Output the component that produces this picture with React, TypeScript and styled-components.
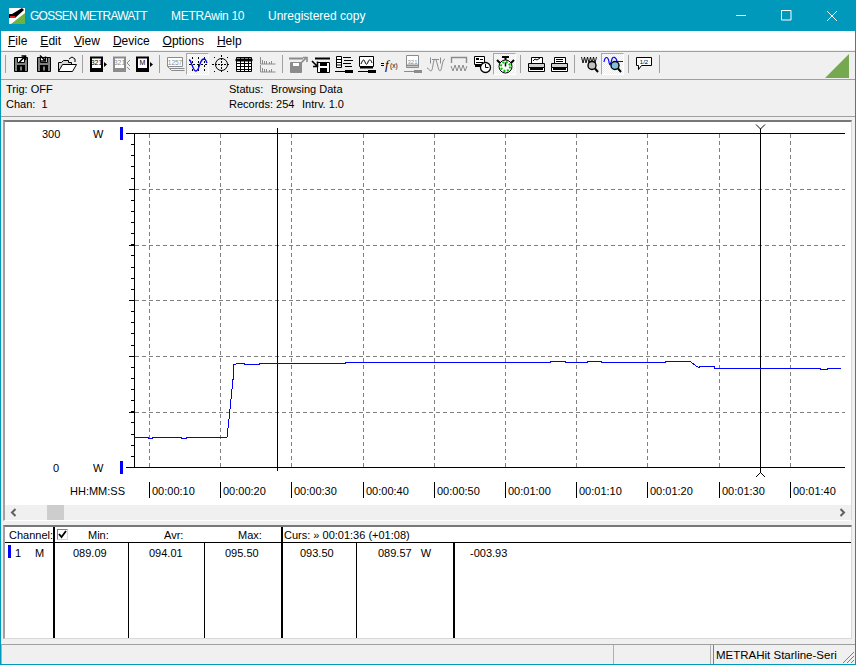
import React from 'react'
import styled, { createGlobalStyle } from 'styled-components'

const GlobalStyle = createGlobalStyle`
  html, body {
    margin: 0;
    padding: 0;
    background: #f0f0f0;
    overflow: hidden;
  }
`

const Window = styled.div`
  box-sizing: border-box;
  width: 856px;
  height: 665px;
  display: flex;
  flex-direction: column;
  background: #f0f0f0;
  border: 1px solid #0099bc;
  border-top: none;
  color: #000;
  font-family: 'Liberation Sans', Arial, sans-serif;
  font-size: 11px;
  overflow: hidden;
`

const TitleBar = styled.div`
  flex: 0 0 31px;
  display: flex;
  align-items: center;
  background: #0099bc;
  color: #fff;
  font-size: 12px;
  padding-left: 8px;
`

const TitleText = styled.span<{ $width: number; $tight?: number }>`
  width: ${(p) => p.$width}px;
  letter-spacing: ${(p) => p.$tight ?? 0}px;
  white-space: nowrap;
`

const LogoMark = styled.svg`
  margin-right: 5px;
`

const WindowControls = styled.div`
  margin-left: auto;
  margin-right: 1px;
  display: flex;
`

const WindowButton = styled.div`
  width: 45px;
  height: 31px;
  display: flex;
  align-items: center;
  justify-content: center;
`

const MenuBar = styled.div`
  flex: 0 0 19px;
  display: flex;
  align-items: center;
  gap: 13px;
  background: #fff;
  padding-left: 7px;
  font-size: 12px;
`

const MenuItem = styled.span`
  white-space: nowrap;
`

const Toolbar = styled.div`
  box-sizing: border-box;
  flex: 0 0 29px;
  display: flex;
  align-items: flex-start;
  margin-top: 1px;
  padding-top: 1px;
  border-top: 1px solid #a0a0a0;
  border-bottom: 1px solid #a0a0a0;
`

const Separator = styled.div`
  flex: 0 0 8px;
  height: 18px;
  margin-top: 2px;
  display: flex;
  justify-content: center;

  &::before {
    content: '';
    width: 1px;
    height: 100%;
    background: #a0a0a0;
  }
`

const ToolButton = styled.div<{ $active?: boolean; $muted?: boolean }>`
  box-sizing: border-box;
  flex: 0 0 23px;
  height: 22px;
  display: flex;
  align-items: center;
  justify-content: center;
  color: ${(p) => (p.$muted ? '#8c8c8c' : '#000')};
  ${(p) =>
    p.$active &&
    `
    background: repeating-conic-gradient(#fff 0 25%, #ececec 0 50%) 0 0 / 2px 2px;
    border: 1px solid #a8a8a8;
    border-right-color: #fff;
    border-bottom-color: #fff;
  `}
`

const CornerMark = styled.svg`
  margin-left: auto;
  margin-right: 6px;
  margin-top: 1px;
`

const InfoPanel = styled.div`
  flex: 0 0 36px;
  display: grid;
  grid-template-columns: 223px 1fr;
  grid-auto-rows: 15px;
  align-content: center;
  padding-left: 5px;
  border-bottom: 1px solid #a0a0a0;
`

const InfoCell = styled.div`
  display: flex;
  white-space: pre;
`

const InfoLabel = styled.span<{ $width?: number }>`
  width: ${(p) => (p.$width ? `${p.$width}px` : 'auto')};
`

const ChartFrame = styled.div`
  flex: 0 0 398px;
  display: flex;
  flex-direction: column;
  margin: 3px 3px 0 2px;
  background: #fff;
  border-top: 2px solid #787878;
  border-left: 2px solid #a0a0a0;
  border-right: 1px solid #d8d8d8;
  border-bottom: 1px solid #fff;
`

const ChartSvg = styled.svg`
  display: block;
  flex: 0 0 383px;
  font-family: 'Liberation Sans', Arial, sans-serif;
  font-size: 11px;
`

const ScrollBar = styled.div`
  flex: 1;
  display: flex;
  align-items: center;
  background: #f0f0f0;
`

const ScrollArrow = styled.svg<{ $right?: boolean }>`
  margin-left: ${(p) => (p.$right ? 'auto' : '5px')};
  margin-right: ${(p) => (p.$right ? '5px' : '0')};
`

const ScrollThumb = styled.div`
  width: 17px;
  height: 100%;
  margin-left: 30px;
  background: #cdcdcd;
`

const TableFrame = styled.div`
  flex: 0 0 111px;
  margin: 4px 3px 0 2px;
  display: grid;
  grid-template-columns: 50px 74px 76px 78px 74px 98px 1fr;
  grid-template-rows: 16px 1fr;
  background: #fff;
  border-top: 2px solid #787878;
  border-left: 2px solid #a0a0a0;
  border-right: 1px solid #d8d8d8;
  border-bottom: 1px solid #d8d8d8;
`

const HeadCell = styled.div<{ $line?: boolean; $pad?: number; $span?: number }>`
  display: flex;
  align-items: center;
  box-sizing: border-box;
  padding-left: ${(p) => p.$pad ?? 0}px;
  border-bottom: 1px solid #000;
  border-right: ${(p) => (p.$line ? '2px solid #000' : 'none')};
  grid-column: ${(p) => (p.$span ? `span ${p.$span}` : 'auto')};
  white-space: pre;
`

const Cell = styled.div<{ $line?: number; $pad?: number }>`
  box-sizing: border-box;
  display: flex;
  padding-top: 4px;
  padding-left: ${(p) => p.$pad ?? 0}px;
  border-right: ${(p) => (p.$line ? `${p.$line}px solid #000` : 'none')};
  white-space: pre;
`

const CheckBox = styled.div`
  box-sizing: border-box;
  width: 11px;
  height: 11px;
  margin-right: 20px;
  border: 1px solid #808080;
  border-right-color: #d8d8d8;
  border-bottom-color: #d8d8d8;
  display: flex;
  align-items: center;
  justify-content: center;
`

const ChannelSwatch = styled.span`
  width: 3px;
  height: 13px;
  margin-top: -2px;
  margin-right: 4px;
  background: #0000ff;
`

const ChannelNo = styled.span`
  width: 20px;
`

const StatusBar = styled.div`
  flex: 1;
  margin-top: 5px;
  display: grid;
  grid-template-columns: 609px 3px 98px 2px 1fr;
  border-top: 1px solid #a0a0a0;
`

const StatusPane = styled.div<{ $sunken?: boolean; $closed?: boolean; $column: number }>`
  grid-column: ${(p) => p.$column};
  display: flex;
  align-items: center;
  position: relative;
  padding-left: 2px;
  font-size: 11.5px;
  white-space: nowrap;
  overflow: hidden;
  border-left: 1px solid ${(p) => (p.$sunken ? '#808080' : '#b0b0b0')};
  border-right: ${(p) => (p.$closed ? '1px solid #b0b0b0' : 'none')};
`

const Grip = styled.svg`
  position: absolute;
  right: 0;
  bottom: 0;
`

const ticks = [149, 220, 291, 363, 434, 505, 576, 647, 719, 790]
const labels = [
  '00:00:10',
  '00:00:20',
  '00:00:30',
  '00:00:40',
  '00:00:50',
  '00:01:00',
  '00:01:10',
  '00:01:20',
  '00:01:30',
  '00:01:40',
]
const majors = [189, 245, 300, 356, 412]
const minors = Array.from({ length: 29 }, (_, i) => 133 + Math.round(((i + 1) * 334) / 30))

const trace =
  '134,438 148,438 149,439 152,439 153,438 181,438 182,439 186,439 187,438 227,438 229,420 233,380 233,369 234,365 238,364 244,364 245,365 259,365 260,364 345,364 346,363 550,363 551,362 565,362 566,363 587,363 588,362 601,362 602,363 665,363 666,362 690,362 697,367 699,368 700,367 714,367 715,369 820,369 821,370 827,370 828,369 841,369'

const Chart = () => (
  <ChartSvg width={846} height={383} viewBox="5 122 846 383">
    <g stroke="#808080" strokeDasharray="4 3" shapeRendering="crispEdges">
      {ticks.map((x) => (
        <line key={x} x1={x + 0.5} x2={x + 0.5} y1={134} y2={467} />
      ))}
      {majors.map((y) => (
        <line key={y} x1={135} x2={845} y1={y + 0.5} y2={y + 0.5} />
      ))}
    </g>
    <g stroke="#000" shapeRendering="crispEdges">
      <line x1={126} x2={845} y1={133.5} y2={133.5} />
      <line x1={126} x2={845} y1={467.5} y2={467.5} />
      <line x1={134.5} x2={134.5} y1={133} y2={468} />
      {minors.map((y) => (
        <line key={y} x1={131} x2={134} y1={y + 0.5} y2={y + 0.5} />
      ))}
      {majors.map((y) => (
        <line key={y} x1={129} x2={134} y1={y + 0.5} y2={y + 0.5} />
      ))}
      <line x1={277.5} x2={277.5} y1={128} y2={471} />
      <line x1={760.5} x2={760.5} y1={129} y2={473} />
      {ticks.map((x) => (
        <line key={x} x1={x + 0.5} x2={x + 0.5} y1={482} y2={498} />
      ))}
    </g>
    <g stroke="#000" fill="none">
      <path d="M756 124.5 760.5 129 765 124.5" />
      <path d="M756 477 760.5 472.5 765 477" />
    </g>
    <polyline
      points={trace}
      transform="translate(0 -0.5)"
      fill="none"
      stroke="#0000ff"
      shapeRendering="crispEdges"
    />
    <g fill="#0000ff">
      <rect x={120} y={127} width={3} height={13} />
      <rect x={120} y={461} width={3} height={13} />
    </g>
    <g fill="#000">
      <text x={42} y={138}>300</text>
      <text x={93} y={138}>W</text>
      <text x={53} y={472}>0</text>
      <text x={93} y={472}>W</text>
      <text x={70} y={495}>HH:MM:SS</text>
      {ticks.map((x, i) => (
        <text key={x} x={x + 3} y={495}>
          {labels[i]}
        </text>
      ))}
    </g>
  </ChartSvg>
)

const Floppy = () => (
  <>
    <path d="M3.5 3.5h13v14h-13z" fill="#808080" stroke="currentColor" />
    <path d="M6.5 3.500h7v5h-7z" fill="#fff" stroke="currentColor" />
    <path d="M6 11h8v6.500H6z" fill="currentColor" />
    <path d="M9 12.500h2v4H9z" fill="#808080" />
  </>
)

const MeterBody = ({ label }: { label: string }) => (
  <>
    <path d="M3 3.500h11v12H3z" fill="#fff" stroke="currentColor" strokeWidth={2} />
    <path d="M2 14h13v4H2z" fill="currentColor" />
    <text x={8.500} y={11} fontSize={7} fontFamily="Liberation Sans" textAnchor="middle" fill="currentColor">
      {label}
    </text>
  </>
)

const Lead = () => (
  <>
    <path d="M1 17.500h11" stroke="currentColor" />
    <path d="M11 16h8v3h-8z" fill="currentColor" />
  </>
)

const Glass = ({ fill }: { fill: string }) => (
  <>
    <circle cx={12} cy={11.500} r={4} fill={fill} stroke="currentColor" strokeWidth={1.400} />
    <path d="M15 14.500 18 18" stroke="currentColor" strokeWidth={2} />
  </>
)

const Printer = ({ open }: { open?: boolean }) => (
  <>
    <path d="M5.500 3.500h11v6h-11z" fill="#fff" stroke="currentColor" />
    {open ? (
      <path d="M7 7l2-2 2 1 3-2" stroke="currentColor" fill="none" />
    ) : (
      <path d="M7 5.500h7M7 7.500h7" stroke="currentColor" />
    )}
    <path d="M2.500 9.500h16v4h-16z" fill="#d0d0d0" stroke="currentColor" />
    <path d="M2.500 13.500h16v4h-16z" fill="#fff" stroke="currentColor" />
    <path d="M4 15h13" stroke="currentColor" strokeWidth={2} />
  </>
)

const icons: Record<string, React.ReactNode> = {
  saveOut: (
    <>
      <Floppy />
      <path d="M8.500 8 14 2.500M10.500 2h4v4" stroke="currentColor" strokeWidth={1.600} fill="none" />
    </>
  ),
  saveIn: (
    <>
      <Floppy />
      <path d="M6 1.500 11 6.500M6.500 7h5V2.500" stroke="currentColor" strokeWidth={1.600} fill="none" />
    </>
  ),
  open: (
    <>
      <path d="M1.500 8.500h3l2-2h5v2h3v9h-13z" fill="#d8d8d8" stroke="currentColor" />
      <path d="M1.500 17.500 5.500 10.500h14l-4 7z" fill="#fff" stroke="currentColor" />
      <path d="M12 5l3-2 3 2M18 5v3" stroke="currentColor" fill="none" />
    </>
  ),
  meterOut: (
    <>
      <MeterBody label="321" />
      <path d="M16 8l3 2.500-3 2.500z" fill="currentColor" />
    </>
  ),
  meterSwap: (
    <>
      <MeterBody label="321" />
      <path d="M19 6l-3 3 3 3M16 13l3 3" stroke="currentColor" fill="none" />
    </>
  ),
  meterMem: (
    <>
      <MeterBody label="M" />
      <path d="M16 8l3 2.500-3 2.500z" fill="currentColor" />
    </>
  ),
  counter: (
    <>
      <path d="M2.500 3.500h15v9h-15z" fill="#fff" stroke="currentColor" />
      <text x={10} y={10.500} fontSize={6.500} fontFamily="Liberation Sans" textAnchor="middle" fill="currentColor">
        1257
      </text>
      <path d="M2.500 12.500l2 2h15M4.500 14.500l2 2h13" stroke="currentColor" fill="none" />
    </>
  ),
  wave: (
    <>
      <path d="M1 10.500h18M4.500 3v15M10.500 3v15M16.500 3v15" stroke="#000" strokeDasharray="2 2" />
      <path d="M1 6c2 0 2 3 3 5s2 6 4 6 3-4 4-7 2-5 4-5 2 2 3 4" stroke="#0000ff" fill="none" strokeWidth={1.300} />
    </>
  ),
  target: (
    <>
      <path d="M1 10.500h18M10.500 1v18" stroke="currentColor" strokeDasharray="2 1" />
      <circle cx={10.500} cy={10.500} r={6} fill="none" stroke="currentColor" />
      <path d="M3 3.500h1M16 3.500h1M3 17.500h1M16 17.500h1" stroke="currentColor" />
    </>
  ),
  table: (
    <>
      <path d="M2.500 3.500h15v14h-15z" fill="#fff" stroke="currentColor" />
      <path d="M2 5h16v2H2zM6.500 4v13M10.500 4v13M14.500 4v13M3 9.500h14M3 12.500h14M3 15.500h14" fill="currentColor" stroke="currentColor" />
    </>
  ),
  bars: (
    <>
      <path d="M3.500 3v7h15M3.500 11v7h15" stroke="currentColor" fill="none" />
      <path d="M5.500 6v4M7.500 7v3M9.500 7v3M12.500 8v2M14.500 7v3M5.500 14v4M7.500 15v3M9.500 15v3M12.500 16v2M14.500 15v3" stroke="currentColor" />
    </>
  ),
  floppyUp: (
    <>
      <path d="M2.500 8.500h11v10h-11z" fill="currentColor" stroke="currentColor" />
      <path d="M5 9h6v3H5z" fill="#fff" />
      <path d="M1 4.500h14" stroke="currentColor" strokeWidth={2} />
      <path d="M13 9l5-5M15 3.500h4V8" stroke="currentColor" strokeWidth={1.600} fill="none" />
    </>
  ),
  floppyDown: (
    <>
      <path d="M6.500 8.500h12v10h-12z" fill="#fff" stroke="currentColor" />
      <path d="M9 14h7v4H9zM9 9h7v3H9z" fill="currentColor" />
      <path d="M4 4.500h15" stroke="currentColor" strokeWidth={2} />
      <path d="M1 7l5 5M6.500 7.500V12.500H2" stroke="currentColor" strokeWidth={1.600} fill="none" />
    </>
  ),
  config: (
    <>
      <path d="M2.500 2.500h5v11h-5z" fill="#fff" stroke="currentColor" />
      <path d="M3 5.500h4M3 8.500h4M3 11h4" stroke="currentColor" />
      <path d="M9 3h8v1H9zM10 6h9v1h-9zM9 9h8v1H9zM11 12h7v1h-7z" fill="currentColor" />
      <Lead />
    </>
  ),
  monitor: (
    <>
      <path d="M2.500 2.500h14v10h-14z" fill="#fff" stroke="currentColor" />
      <path d="M4 10c2-5 3-5 4-2s2 3 3 0 3-3 4 1" stroke="currentColor" fill="none" />
      <path d="M3 12.500h13v2H3z" fill="currentColor" />
      <Lead />
    </>
  ),
  formula: (
    <>
      <path d="M1 9.500h3M1 11.500h3" stroke="currentColor" />
      <text x={5} y={15} fontSize={13} fontStyle="italic" fontFamily="Liberation Serif" fill="currentColor">
        f
      </text>
      <text x={10} y={13.500} fontSize={6.500} fontFamily="Liberation Sans" fill="currentColor">
        (x)
      </text>
    </>
  ),
  meterLead: (
    <>
      <path d="M3.500 1.500h12v12h-12z" fill="#fff" stroke="currentColor" />
      <text x={9.500} y={9.500} fontSize={6} fontFamily="Liberation Sans" textAnchor="middle" fill="currentColor">
        321
      </text>
      <path d="M4 11.500h11" stroke="currentColor" strokeWidth={2} />
      <Lead />
    </>
  ),
  sineCut: (
    <>
      <path d="M1 14c2 0 2 3 4 3s2-12 4-12 3 12 5 12 2-12 5-12" stroke="currentColor" fill="none" />
      <path d="M4.500 3.500v6M14.500 3.500v6M6 5.500h7" stroke="currentColor" />
    </>
  ),
  sineDense: (
    <>
      <path d="M2.500 9V3.500h15V9" stroke="currentColor" fill="none" strokeWidth={1.400} />
      <path d="M2 12l2 5 2-6 2 6 2-6 2 6 2-6 2 6 2-5" stroke="currentColor" fill="none" />
    </>
  ),
  clock: (
    <>
      <path d="M2.500 2.500h10v8h-10z" fill="#fff" stroke="currentColor" />
      <path d="M4 4h3v2H4zM8 5h3v1H8zM4 8h7v1H4zM3 11h9v2H3z" fill="currentColor" />
      <circle cx={13.500} cy={13.500} r={5} fill="#fff" stroke="currentColor" strokeWidth={1.300} />
      <path d="M13.500 10v3.500h3" stroke="currentColor" fill="none" />
    </>
  ),
  timer: (
    <>
      <path d="M7 2h7v2H7zM9.500 4h2v4h-2z" fill="currentColor" />
      <path d="M2 6l3 3M19 6l-3 3" stroke="currentColor" strokeWidth={2} />
      <circle cx={10.500} cy={12.500} r={6.500} fill="#fff" stroke="currentColor" />
      <circle cx={10.500} cy={12.500} r={4.500} fill="none" stroke="#00c000" strokeWidth={2} strokeDasharray="2 1.500" />
      <path d="M10.500 8.500v4" stroke="currentColor" strokeWidth={1.500} />
    </>
  ),
  print: <Printer open />,
  printAlt: <Printer />,
  zoomDense: (
    <>
      <path d="M1.500 3l1.500 6 1.500-6 1.500 6 1.500-6 1.500 6 1.500-6 1.500 6 1.500-6 1.500 6 1.500-6" stroke="currentColor" fill="none" strokeWidth={0.900} />
      <Glass fill="#c0c0c0" />
    </>
  ),
  zoomWave: (
    <>
      <path d="M1 8c1-6 4-6 5 0s2 0 3-3 4-2 5 2" stroke="#0000ff" fill="none" strokeWidth={1.200} />
      <path d="M13 7.500h7" stroke="#0000ff" />
      <Glass fill="#80c0d8" />
    </>
  ),
  note: (
    <>
      <path d="M2.500 3.500h15v8h-10l-3 4v-4h-2z" fill="#fff" stroke="currentColor" />
      <text x={10} y={9.500} fontSize={6} fontFamily="Liberation Sans" textAnchor="middle" fill="currentColor">
        1/2
      </text>
    </>
  ),
}

const Tool = ({ name, active, muted }: { name: string; active?: boolean; muted?: boolean }) => (
  <ToolButton $active={active} $muted={muted}>
    <svg width={20} height={20} viewBox="0 0 20 20">
      {icons[name]}
    </svg>
  </ToolButton>
)

const Logo = () => (
  <LogoMark width={16} height={16} viewBox="0 0 16 16">
    <path d="M0 0h16v16H0z" fill="#fff" />
    <path d="M2 16 16 5v11z" fill="#6cb33f" />
    <path d="M0 6h3L13 0l2 2-9 8H0z" fill="#000" />
    <path d="M1 8h5v2H1z" fill="#e02020" />
  </LogoMark>
)

export default function App() {
  return (
    <>
      <GlobalStyle />
      <Window>
        <TitleBar>
          <Logo />
          <TitleText $width={141} $tight={-0.75}>GOSSEN METRAWATT</TitleText>
          <TitleText $width={97} $tight={-0.3}>METRAwin 10</TitleText>
          <TitleText $width={110}>Unregistered copy</TitleText>
          <WindowControls>
            <WindowButton>
              <svg width={11} height={11} viewBox="0 0 11 11">
                <path d="M0 5.500h10" stroke="#fff" />
              </svg>
            </WindowButton>
            <WindowButton>
              <svg width={11} height={11} viewBox="0 0 11 11">
                <path d="M.5.500h9.500v9.500H.5z" stroke="#fff" fill="none" />
              </svg>
            </WindowButton>
            <WindowButton>
              <svg width={12} height={12} viewBox="0 0 12 12">
                <path d="M1 1l10 10M11 1 1 11" stroke="#fff" />
              </svg>
            </WindowButton>
          </WindowControls>
        </TitleBar>
        <MenuBar>
          <MenuItem><u>F</u>ile</MenuItem>
          <MenuItem><u>E</u>dit</MenuItem>
          <MenuItem><u>V</u>iew</MenuItem>
          <MenuItem><u>D</u>evice</MenuItem>
          <MenuItem><u>O</u>ptions</MenuItem>
          <MenuItem><u>H</u>elp</MenuItem>
        </MenuBar>
        <Toolbar>
          <Separator />
          <Tool name="saveOut" />
          <Tool name="saveIn" />
          <Tool name="open" />
          <Separator />
          <Tool name="meterOut" />
          <Tool name="meterSwap" muted />
          <Tool name="meterMem" />
          <Separator />
          <Tool name="counter" muted />
          <Tool name="wave" active />
          <Tool name="target" />
          <Tool name="table" />
          <Tool name="bars" muted />
          <Separator />
          <Tool name="floppyUp" muted />
          <Tool name="floppyDown" />
          <Tool name="config" />
          <Tool name="monitor" />
          <Tool name="formula" />
          <Tool name="meterLead" muted />
          <Tool name="sineCut" muted />
          <Tool name="sineDense" muted />
          <Tool name="clock" />
          <Tool name="timer" active />
          <Separator />
          <Tool name="print" />
          <Tool name="printAlt" />
          <Separator />
          <Tool name="zoomDense" />
          <Tool name="zoomWave" active />
          <Separator />
          <Tool name="note" />
          <Separator />
          <CornerMark width={24} height={24} viewBox="0 0 24 24">
            <path d="M0 24 24 0v24z" fill="#76a84f" />
          </CornerMark>
        </Toolbar>
        <InfoPanel>
          <InfoCell>Trig: OFF</InfoCell>
          <InfoCell>
            <InfoLabel $width={42}>Status:</InfoLabel>
            Browsing Data
          </InfoCell>
          <InfoCell>Chan:  1</InfoCell>
          <InfoCell>
            <InfoLabel $width={73}>Records: 254</InfoLabel>
            Intrv. 1.0
          </InfoCell>
        </InfoPanel>
        <ChartFrame>
          <Chart />
          <ScrollBar>
            <ScrollArrow width={7} height={9} viewBox="0 0 7 9">
              <path d="M5.500 1 2 4.500 5.500 8" stroke="#606060" strokeWidth={2} fill="none" />
            </ScrollArrow>
            <ScrollThumb />
            <ScrollArrow $right width={7} height={9} viewBox="0 0 7 9">
              <path d="M1.500 1 5 4.500 1.500 8" stroke="#606060" strokeWidth={2} fill="none" />
            </ScrollArrow>
          </ScrollBar>
        </ChartFrame>
        <TableFrame>
          <HeadCell $line $pad={4}>Channel:</HeadCell>
          <HeadCell $pad={2}>
            <CheckBox>
              <svg width={9} height={9} viewBox="0 0 9 9">
                <path d="M1 4l2.500 3L8 1" stroke="#000" strokeWidth={1.800} fill="none" />
              </svg>
            </CheckBox>
            Min:
          </HeadCell>
          <HeadCell $pad={35}>Avr:</HeadCell>
          <HeadCell $line $pad={33}>Max:</HeadCell>
          <HeadCell $span={3} $pad={1}>Curs: » 00:01:36 (+01:08)</HeadCell>
          <Cell $line={2} $pad={3}>
            <ChannelSwatch />
            <ChannelNo>1</ChannelNo>
            M
          </Cell>
          <Cell $line={1} $pad={18}>089.09</Cell>
          <Cell $line={1} $pad={20}>094.01</Cell>
          <Cell $line={2} $pad={20}>095.50</Cell>
          <Cell $line={1} $pad={17}>093.50</Cell>
          <Cell $line={2} $pad={21}>089.57   W</Cell>
          <Cell $pad={15}>-003.93</Cell>
        </TableFrame>
        <StatusBar>
          <StatusPane $column={1} />
          <StatusPane $column={3} $closed />
          <StatusPane $column={5} $sunken>
            METRAHit Starline-Seri
            <Grip width={14} height={14} viewBox="0 0 14 14">
              <path d="M13 2 2 13M13 6 6 13M13 10l-3 3" stroke="#808080" fill="none" />
            </Grip>
          </StatusPane>
        </StatusBar>
      </Window>
    </>
  )
}
